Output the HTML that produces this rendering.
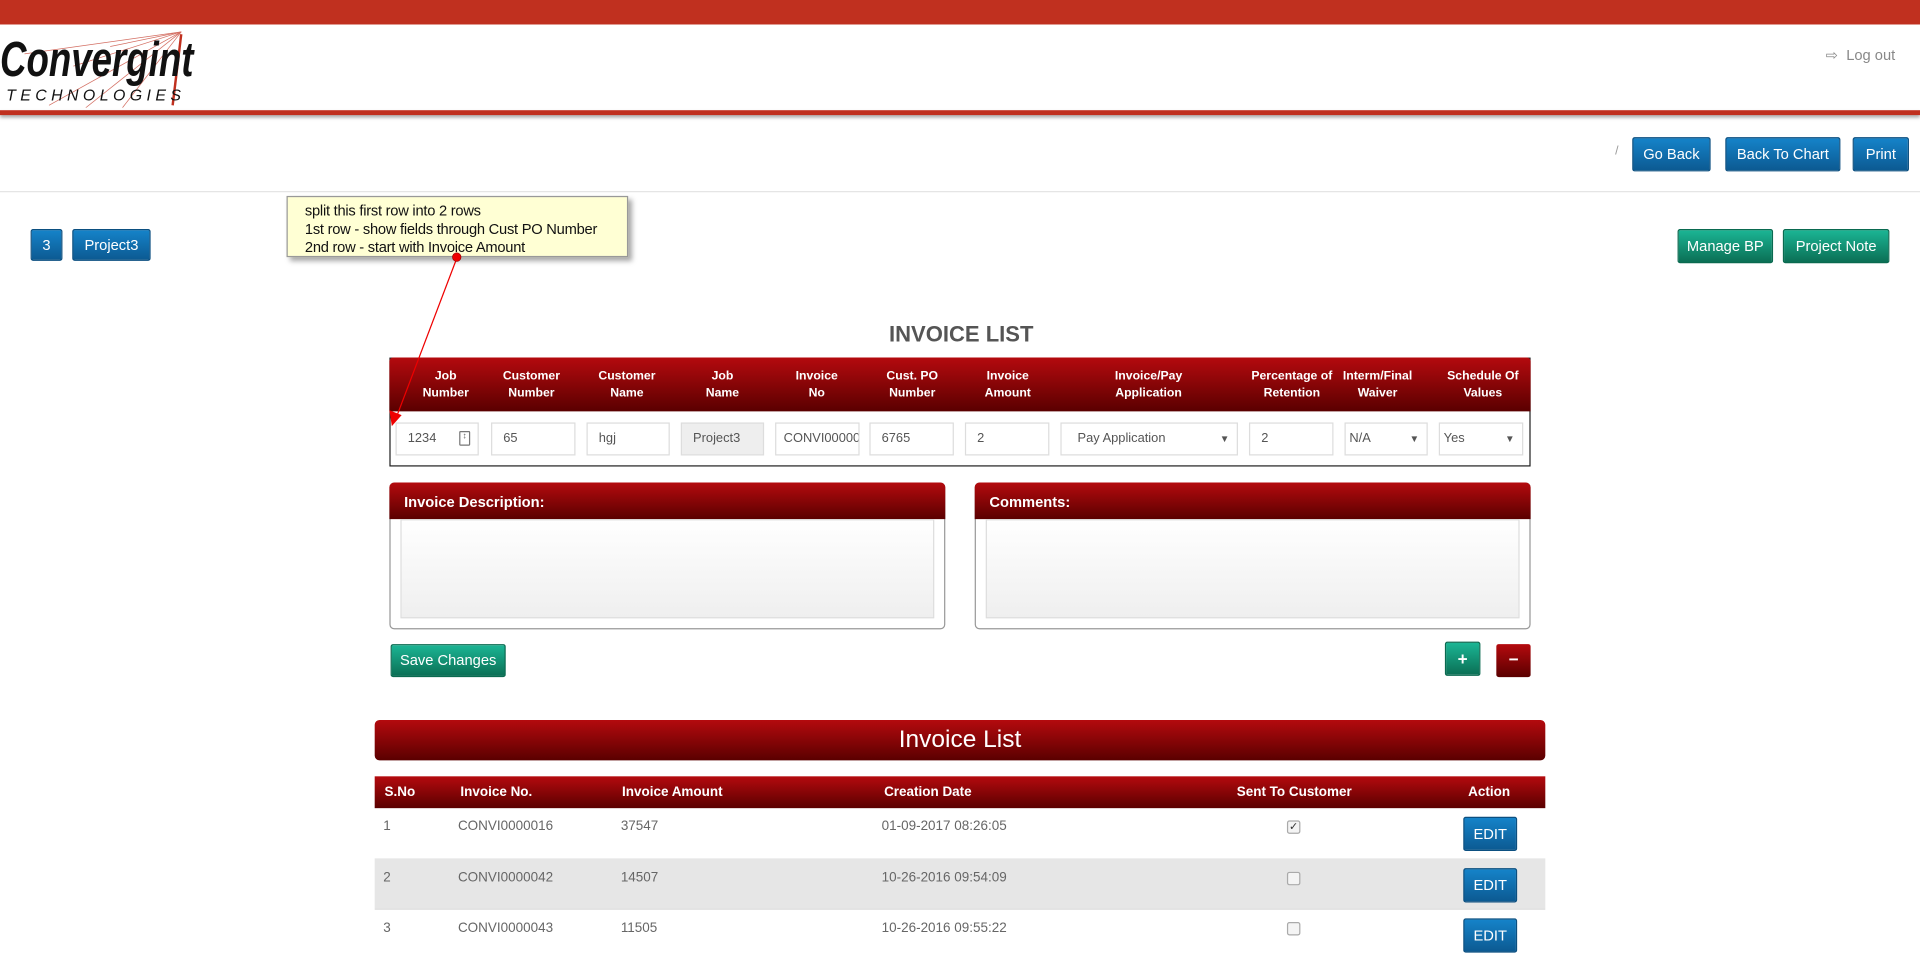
<!DOCTYPE html>
<html><head><meta charset="utf-8">
<style>
html,body{margin:0;padding:0;width:1920px;height:950px;overflow:hidden;background:#fff}
#w{position:absolute;left:0;top:0;width:1568px;height:776px;transform:scale(1.22449);transform-origin:0 0;font-family:"Liberation Sans",Arial,sans-serif}
.a{position:absolute}
.btn{position:absolute;color:#fff;font-size:12px;text-align:center;border-radius:2px;box-sizing:border-box}
.blue{background:linear-gradient(#1583c9,#0c5a92);border:1px solid #0b4f80}
.green{background:linear-gradient(#1bb594,#0b6f55);border:1px solid #0a6a50}
.red{background:linear-gradient(#b40a0e,#5a0000)}
.hd{position:absolute;color:#fff;font-weight:bold;font-size:10px;text-align:center;line-height:14px;width:90px}
.in{position:absolute;top:345px;height:27px;border:1px solid #ddd;box-sizing:border-box;font-size:10.5px;color:#555;line-height:25px;padding-left:9px;background:#fff;overflow:hidden;white-space:nowrap}
.ar{position:absolute;right:6px;top:0;font-size:8px;color:#555}
.th{position:absolute;top:634px;color:#fff;font-weight:bold;font-size:11px;line-height:26px}
.td{position:absolute;font-size:11px;color:#666}
.cb{position:absolute;width:9px;height:9px;border:1px solid #aaa;border-radius:2px;background:#f4f4f4;font-size:9px;line-height:9px;text-align:center;color:#333}
</style></head><body><div id="w">
<div class="a" style="left:0;top:0;width:1568px;height:20px;background:#c0301f"></div>
<div class="a" style="left:0;top:90px;width:1568px;height:4px;background:#c0301f;box-shadow:0 2px 3px rgba(0,0,0,.35)"></div>
<svg class="a" style="left:0;top:22px" width="165" height="66">
<g stroke="#c0301f" stroke-width=".6" opacity=".7"><line x1="148" y1="4" x2="20" y2="22"/><line x1="148" y1="4" x2="40" y2="64"/><line x1="148" y1="4" x2="70" y2="66"/><line x1="148" y1="4" x2="100" y2="66"/><line x1="148" y1="4" x2="60" y2="32"/><line x1="148" y1="4" x2="90" y2="16"/></g>
<line x1="148" y1="6" x2="141" y2="64" stroke="#c0301f" stroke-width="2"/>
<text x="0" y="40" font-family="Liberation Sans Narrow,Liberation Sans,sans-serif" font-weight="bold" font-style="italic" font-size="40" fill="#111" textLength="158" lengthAdjust="spacingAndGlyphs">Convergint</text>
<text x="5" y="60" font-family="Liberation Sans,sans-serif" font-style="italic" font-size="13" fill="#111" letter-spacing="3.6">TECHNOLOGIES</text>
</svg>
<div class="a" style="left:1491px;top:38px;font-size:12px;color:#888">&#x21E8;&nbsp; Log out</div>
<div class="a" style="left:1319px;top:118px;font-size:10px;color:#999">/</div>
<div class="btn blue" style="left:1333px;top:112px;width:64px;height:28px;line-height:26px">Go Back</div>
<div class="btn blue" style="left:1409px;top:112px;width:94px;height:28px;line-height:26px">Back To Chart</div>
<div class="btn blue" style="left:1513px;top:112px;width:46px;height:28px;line-height:26px">Print</div>
<div class="a" style="left:0;top:156px;width:1568px;height:1px;background:#e5e5e5"></div>
<div class="btn blue" style="left:25px;top:187px;width:26px;height:26px;line-height:24px">3</div>
<div class="btn blue" style="left:59px;top:187px;width:64px;height:26px;line-height:24px">Project3</div>
<div class="btn green" style="left:1370px;top:187px;width:78px;height:28px;line-height:26px">Manage BP</div>
<div class="btn green" style="left:1456px;top:187px;width:87px;height:28px;line-height:26px">Project Note</div>
<div class="a" style="left:720px;top:263px;width:130px;text-align:center;font-size:18px;font-weight:bold;color:#555">INVOICE LIST</div>
<div class="a" style="left:318px;top:292px;width:932px;height:89px;border:1px solid #222;box-sizing:border-box"></div>
<div class="a red" style="left:318px;top:292px;width:932px;height:44px;border-radius:3px 3px 0 0"></div>
<div class="hd" style="left:319px;top:301px">Job<br>Number</div>
<div class="hd" style="left:389px;top:301px">Customer<br>Number</div>
<div class="hd" style="left:467px;top:301px">Customer<br>Name</div>
<div class="hd" style="left:545px;top:301px">Job<br>Name</div>
<div class="hd" style="left:622px;top:301px">Invoice<br>No</div>
<div class="hd" style="left:700px;top:301px">Cust. PO<br>Number</div>
<div class="hd" style="left:778px;top:301px">Invoice<br>Amount</div>
<div class="hd" style="left:893px;top:301px">Invoice/Pay<br>Application</div>
<div class="hd" style="left:1010px;top:301px">Percentage of<br>Retention</div>
<div class="hd" style="left:1080px;top:301px">Interm/Final<br>Waiver</div>
<div class="hd" style="left:1166px;top:301px">Schedule Of<br>Values</div>
<div class="in" style="left:323px;width:68px">1234<span class="ar" style="top:6px;width:7px;height:10px;border:1px solid #777;border-radius:1px;line-height:8px;font-size:7px;text-align:center">&#x2195;</span></div>
<div class="in" style="left:401px;width:69px">65</div>
<div class="in" style="left:479px;width:68px">hgj</div>
<div class="in" style="left:556px;width:68px;background:#eee">Project3</div>
<div class="in" style="left:633px;width:69px;padding-left:6px">CONVI000001</div>
<div class="in" style="left:710px;width:69px">6765</div>
<div class="in" style="left:788px;width:69px">2</div>
<div class="in" style="left:866px;width:145px;padding-left:13px">Pay Application<span class="ar">&#9660;</span></div>
<div class="in" style="left:1020px;width:69px">2</div>
<div class="in" style="left:1098px;width:68px;padding-left:3px">N/A<span class="ar">&#9660;</span></div>
<div class="in" style="left:1175px;width:69px;padding-left:3px">Yes<span class="ar">&#9660;</span></div>
<div class="a" style="left:318px;top:394px;width:454px;height:120px;border:1px solid #999;border-radius:4px;box-sizing:border-box"></div>
<div class="a red" style="left:318px;top:394px;width:454px;height:30px;border-radius:4px 4px 0 0"></div>
<div class="a" style="left:330px;top:403px;color:#fff;font-weight:bold;font-size:12px">Invoice Description:</div>
<div class="a" style="left:327px;top:424px;width:436px;height:81px;border:1px solid #ddd;box-sizing:border-box;background:linear-gradient(#fff,#efefef)"></div>
<div class="a" style="left:796px;top:394px;width:454px;height:120px;border:1px solid #999;border-radius:4px;box-sizing:border-box"></div>
<div class="a red" style="left:796px;top:394px;width:454px;height:30px;border-radius:4px 4px 0 0"></div>
<div class="a" style="left:808px;top:403px;color:#fff;font-weight:bold;font-size:12px">Comments:</div>
<div class="a" style="left:805px;top:424px;width:436px;height:81px;border:1px solid #ddd;box-sizing:border-box;background:linear-gradient(#fff,#efefef)"></div>
<div class="btn green" style="left:319px;top:526px;width:94px;height:27px;line-height:25px">Save Changes</div>
<div class="btn green" style="left:1180px;top:524px;width:29px;height:28px;line-height:26px;font-weight:bold;font-size:14px">+</div>
<div class="btn red" style="left:1222px;top:526px;width:28px;height:27px;line-height:25px;font-weight:bold;font-size:14px">&minus;</div>
<div class="a red" style="left:306px;top:588px;width:956px;height:33px;border-radius:4px;color:#fff;font-size:20px;text-align:center;line-height:33px">Invoice List</div>
<div class="a red" style="left:306px;top:634px;width:956px;height:26px"></div>
<div class="th" style="left:314px">S.No</div>
<div class="th" style="left:376px">Invoice No.</div>
<div class="th" style="left:508px">Invoice Amount</div>
<div class="th" style="left:722px">Creation Date</div>
<div class="th" style="left:1010px">Sent To Customer</div>
<div class="th" style="left:1199px">Action</div>
<div class="a" style="left:306px;top:701px;width:956px;height:41px;background:#e6e6e6"></div>
<div class="a" style="left:306px;top:742px;width:956px;height:1px;background:#ddd"></div>
<div class="td" style="left:313px;top:669px">1</div><div class="td" style="left:374px;top:669px">CONVI0000016</div><div class="td" style="left:507px;top:669px">37547</div><div class="td" style="left:720px;top:669px">01-09-2017 08:26:05</div>
<div class="cb" style="left:1051px;top:670px">&#10003;</div>
<div class="btn blue" style="left:1195px;top:667px;width:44px;height:28px;line-height:26px">EDIT</div>
<div class="td" style="left:313px;top:711px">2</div><div class="td" style="left:374px;top:711px">CONVI0000042</div><div class="td" style="left:507px;top:711px">14507</div><div class="td" style="left:720px;top:711px">10-26-2016 09:54:09</div>
<div class="cb" style="left:1051px;top:712px"></div>
<div class="btn blue" style="left:1195px;top:709px;width:44px;height:28px;line-height:26px">EDIT</div>
<div class="td" style="left:313px;top:752px">3</div><div class="td" style="left:374px;top:752px">CONVI0000043</div><div class="td" style="left:507px;top:752px">11505</div><div class="td" style="left:720px;top:752px">10-26-2016 09:55:22</div>
<div class="cb" style="left:1051px;top:753px"></div>
<div class="btn blue" style="left:1195px;top:750px;width:44px;height:28px;line-height:26px">EDIT</div>
<div class="a" style="left:234px;top:160px;width:279px;height:50px;background:#ffffd4;border:1px solid #999;box-sizing:border-box;box-shadow:3px 3px 4px rgba(0,0,0,.35);font-size:12px;line-height:15px;color:#111;padding:4px 0 0 14px;letter-spacing:-0.2px">split this first row into 2 rows<br>1st row - show fields through Cust PO Number<br>2nd row - start with Invoice Amount</div>
<svg class="a" style="left:0;top:0" width="1568" height="776">
<line x1="373" y1="211" x2="324" y2="340" stroke="#e00" stroke-width="1"/>
<polygon points="320,348 318,335 328,339" fill="#e00"/>
<circle cx="373" cy="210" r="3.5" fill="#e00" stroke="#900" stroke-width=".5"/>
</svg>
</div></body></html>
